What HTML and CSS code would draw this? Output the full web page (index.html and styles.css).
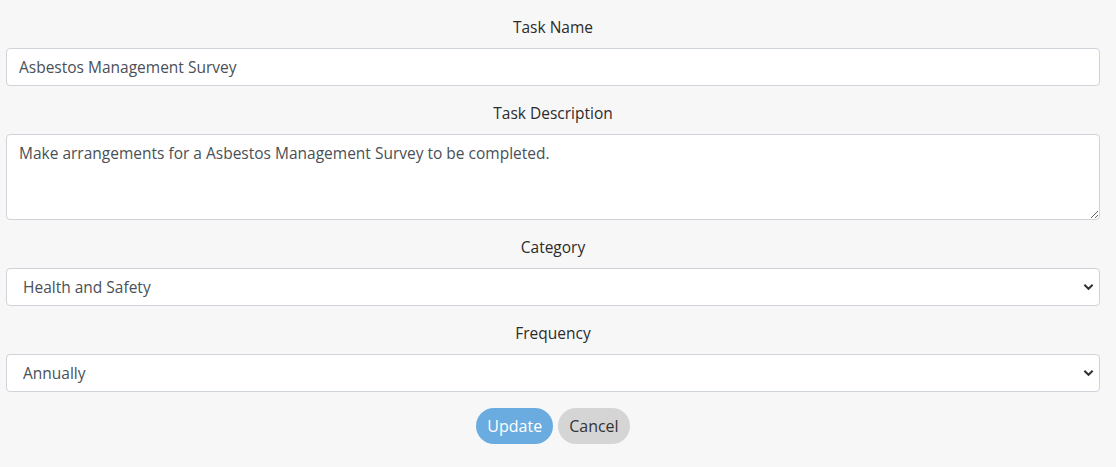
FILE: index.html
```html
<!DOCTYPE html>
<html lang="en">
<head>
<meta charset="utf-8">
<title>Edit Task</title>
<link rel="stylesheet" href="styles.css">
</head>
<body>
<form class="task-form">
  <div class="group">
    <label class="label" for="name">Task Name</label>
    <input class="control" id="name" type="text" value="Asbestos Management Survey">
  </div>
  <div class="group">
    <label class="label" for="desc">Task Description</label>
    <textarea class="control area" id="desc">Make arrangements for a Asbestos Management Survey to be completed.</textarea>
  </div>
  <div class="group">
    <label class="label" for="cat">Category</label>
    <select class="control select" id="cat">
      <option>Health and Safety</option>
    </select>
  </div>
  <div class="group">
    <label class="label" for="freq">Frequency</label>
    <select class="control select" id="freq">
      <option>Annually</option>
    </select>
  </div>
  <div class="actions">
    <button type="button" class="btn btn-update">Update</button>
    <button type="button" class="btn btn-cancel">Cancel</button>
  </div>
</form>
</body>
</html>
```
FILE: styles.css
```css
html, body {
  margin: 0;
  background: #f7f7f7;
}
body {
  font-family: "Open Sans", "Lato", sans-serif;
  font-size: 16px;
  color: #212529;
}
.task-form {
  padding: 16px 16px 0 6px;
}
.group {
  display: flex;
  flex-direction: column;
  margin-bottom: 16px;
}
.label {
  display: block;
  text-align: center;
  line-height: 22px;
  margin-bottom: 10px;
  font-size: 15.5px;
  color: #2b2b2b;
}
.control {
  box-sizing: border-box;
  width: 100%;
  height: 38px;
  padding: 6px 12px;
  font-family: inherit;
  font-size: 15.5px;
  line-height: 24px;
  color: #495057;
  background: #fff;
  border: 1px solid #ced4da;
  border-radius: 4px;
  margin: 0;
}
.area {
  height: 86px;
  resize: vertical;
}
.select {
  appearance: none;
  -webkit-appearance: none;
  padding-left: 16px;
  background-image: url("data:image/svg+xml,%3Csvg xmlns='http://www.w3.org/2000/svg' width='12' height='8' viewBox='0 0 12 8'%3E%3Cpath d='M1.5 1.5 L6 6 L10.5 1.5' fill='none' stroke='%23333' stroke-width='2.2'/%3E%3C/svg%3E");
  background-repeat: no-repeat;
  background-position: right 5px center;
  background-size: 11px 8px;
}
.actions {
  display: flex;
  justify-content: center;
  gap: 5px;
  padding-bottom: 24px;
}
.btn {
  font-family: inherit;
  font-size: 16px;
  height: 36px;
  padding: 0 11px;
  border: none;
  border-radius: 18px;
  line-height: 36px;
}
.btn-update {
  background: #6aacdf;
  color: #fff;
}
.btn-cancel {
  background: #d5d5d5;
  color: #333;
}
```
